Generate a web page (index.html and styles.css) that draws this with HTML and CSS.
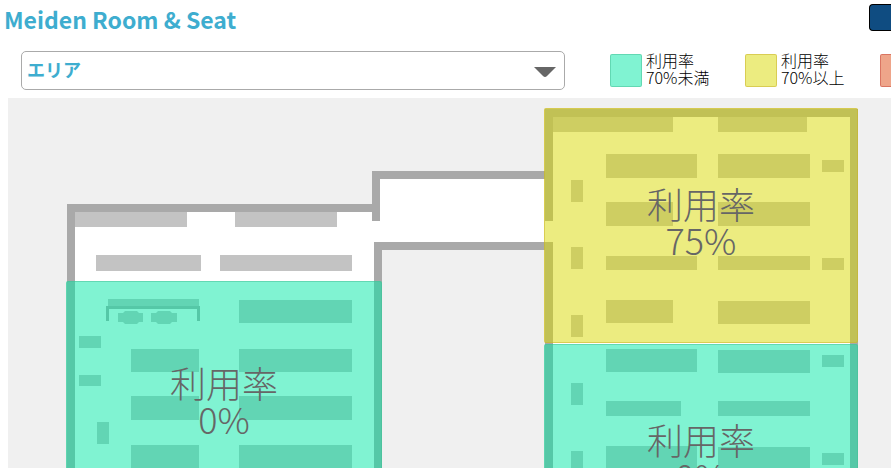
FILE: index.html
```
<!DOCTYPE html>
<html lang="ja">
<head>
<meta charset="utf-8">
<meta name="viewport" content="width=device-width, initial-scale=1">
<title>Meiden Room &amp; Seat</title>
<link rel="stylesheet" href="styles.css">
</head>
<body>
<header class="header">
  <h1 class="title">Meiden Room &amp; Seat</h1>
  <button class="menu-button" type="button" aria-label="メニュー"></button>
</header>
<div class="toolbar">
  <div class="area">
    <select class="area-select" aria-label="エリア">
      <option>エリア</option>
    </select>
    <svg class="area-arrow" viewBox="0 0 22 11" aria-hidden="true"><path d="M0 0H22L13 9Q11 11 9 9Z"/></svg>
  </div>
  <ul class="legend">
    <li class="legend-item"><span class="swatch low"></span><span>利用率<br>70%未満</span></li>
    <li class="legend-item"><span class="swatch mid"></span><span>利用率<br>70%以上</span></li>
    <li class="legend-item"><span class="swatch high"></span></li>
  </ul>
</div>
<main class="map">
  <svg class="plan" width="1000" height="600" viewBox="8 98 1000 600" aria-hidden="true">
    <!-- floor -->
    <path class="floor" d="M67 204H372V171H545V109H858V698H545V250H382V698H67Z"/>
    <!-- walls -->
    <path class="wall" d="M67 698V204H372V171H545V109H858V698H850V117H553V221H545V179H380V221H372V212H75V698Z"/>
    <path class="wall" d="M374 698V242H553V698H545V250H382V698Z"/>
    <!-- west wing furniture -->
    <path class="desk" d="M75 212h112v15h-112zM235 212h102v15h-102zM96 255h105v16h-105zM220 255h132v16h-132z
      M239 300h113v23h-113zM239 349h113v23h-113zM239 396h113v24h-113zM239 445h113v24h-113z
      M131 349h68v23h-68zM131 396h68v24h-68zM131 445h68v24h-68z
      M79 336h22v12h-22zM79 375h22v11h-22zM97 422h12v22h-12zM108 299h91v7h-91z
      M118 313h5l2-2h12l2 2h4v9h-4l-2 2h-12l-2-2h-5zM151 313h5l2-2h12l2 2h5v9h-5l-2 2h-12l-2-2h-5z"/>
    <path class="wall" d="M106 306H200V321H197V309H109V321H106Z"/>
    <!-- east wing furniture -->
    <path class="desk" d="M553 117h120v15h-120zM718 117h89v15h-89zM606 154h91v24h-91zM718 154h92v24h-92z
      M606 202h67v24h-67zM718 202h92v24h-92zM606 256h91v14h-91zM718 256h92v14h-92z
      M606 300h67v23h-67zM718 301h92v23h-92zM606 349h91v23h-91zM718 350h92v23h-92z
      M606 401h75v15h-75zM718 401h92v15h-92zM606 446h91v24h-91zM718 447h92v24h-92z
      M822 160h22v12h-22zM822 258h22v12h-22zM822 355h22v12h-22zM822 453h22v12h-22z
      M571 180h12v22h-12zM571 247h12v22h-12zM571 315h12v22h-12zM571 383h12v22h-12zM571 451h12v22h-12z"/>
  </svg>
  <button class="zone zone-west low" type="button">利用率<br>0%</button>
  <button class="zone zone-northeast mid" type="button">利用率<br>75%</button>
  <button class="zone zone-southeast low" type="button">利用率<br>0%</button>
</main>
</body>
</html>
```
FILE: styles.css
```
* {
  box-sizing: border-box;
}

body {
  display: flex;
  flex-direction: column;
  height: 100vh;
  margin: 0;
  overflow: hidden;
  background: #fff;
  color: #000;
  font-family: "Noto Sans CJK JP", sans-serif;
  font-weight: 300;
}

.header {
  display: flex;
  justify-content: space-between;
  height: 40px;
  padding: 4px 0 0 4px;
}

.title {
  margin: 0;
  color: #3eadcf;
  font-size: 23px;
  font-weight: 700;
  line-height: 30px;
}

.menu-button {
  width: 22px;
  height: 27px;
  border: 1px solid #000;
  border-right: 0;
  border-radius: 4px 0 0 4px;
  background: #0f4c81;
}

.toolbar {
  display: flex;
  gap: 45px;
  height: 58px;
  padding: 11px 0 0 21px;
}

.area {
  position: relative;
  flex: 1;
}

.area-select {
  width: 100%;
  height: 39px;
  padding: 0 5px 3px;
  appearance: none;
  border: 1px solid #aaa;
  border-radius: 5px;
  background: #fff;
  color: #3eadcf;
  font: 700 18px "Noto Sans CJK JP", sans-serif;
}

.area-arrow {
  position: absolute;
  top: 16px;
  right: 9px;
  width: 22px;
  height: 11px;
  fill: #666;
  pointer-events: none;
}

.legend {
  display: flex;
  width: 281px;
  margin: 0;
  padding: 1px 0 0;
  overflow: hidden;
  list-style: none;
}

.legend-item {
  display: flex;
  flex-shrink: 0;
  gap: 4px;
  width: 135px;
  font-size: 16px;
  line-height: 17px;
}

.swatch {
  width: 32px;
  height: 33px;
  margin-top: 2px;
  border: 1px solid;
  border-radius: 2px;
}

.low {
  border-color: rgba(70, 190, 150, 0.5);
  background: rgba(1, 231, 165, 0.5);
}

.mid {
  border-color: rgba(200, 175, 40, 0.5);
  background: rgba(217, 217, 1, 0.5);
}

.high {
  border-color: rgba(200, 70, 60, 0.5);
  background: rgba(221, 75, 21, 0.5);
}

.map {
  position: relative;
  flex: 1;
  margin-left: 8px;
  overflow: hidden;
  background: #f0f0f0;
}

.plan {
  display: block;
}

.floor {
  fill: #fff;
}

.wall {
  fill: #a9a9a9;
}

.desk {
  fill: #c3c3c3;
}

.zone {
  position: absolute;
  padding: 0;
  border-width: 1px;
  border-style: solid;
  border-radius: 2px;
  color: #666;
  font: 300 36px/36px "Noto Sans CJK JP", sans-serif;
}

.zone-west {
  top: 183px;
  left: 58px;
  width: 316px;
  height: 238px;
}

.zone-northeast,
.zone-southeast {
  left: 536px;
  width: 314px;
  height: 235px;
  padding-bottom: 9px;
}

.zone-northeast {
  top: 10px;
}

.zone-southeast {
  top: 246px;
}
```
